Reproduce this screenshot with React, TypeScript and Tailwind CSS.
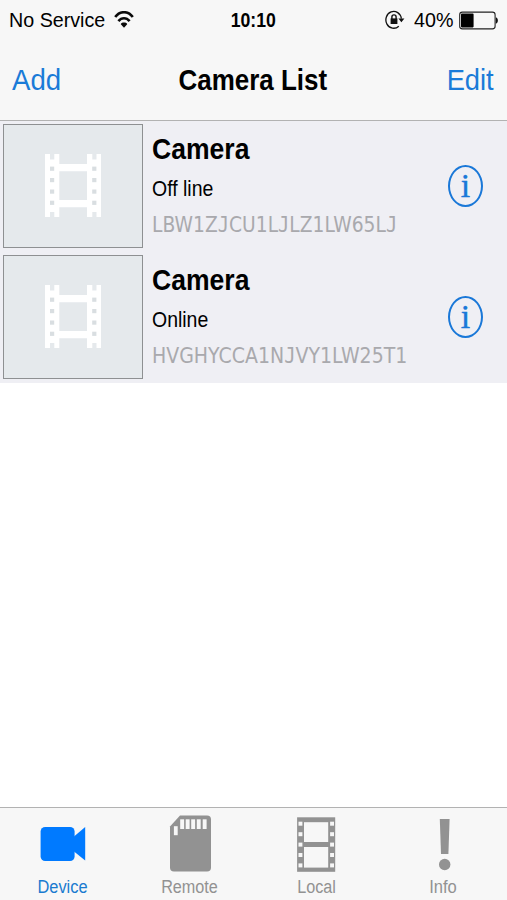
import React, { Fragment, FunctionComponent, ReactNode } from "react";

interface CameraModel {
  id: string;
  name: string;
  status: string;
  idClassName: string;
}

interface TabModel {
  name: string;
  className: string;
  icon: ReactNode;
}

const cameras: CameraModel[] = [
  { id: "LBW1ZJCU1LJLZ1LW65LJ", name: "Camera", status: "Off line", idClassName: "scale-x-[0.85]" },
  { id: "HVGHYCCA1NJVY1LW25T1", name: "Camera", status: "Online", idClassName: "scale-x-[0.86]" },
];

const WifiIcon = () => (
  <svg className="w-5 h-[18px]" viewBox="0 0 20 18" fill="none" stroke="#0a0a0a" strokeWidth="2.6">
    <path d="M1.2 6C6-.4 14-.4 18.8 6" />
    <path d="M4.4 10.1C7.6 6.2 12.4 6.2 15.6 10.1" />
    <path d="M10 16.8 6.8 13.2C6.8 10.8 13.2 10.8 13.2 13.2Z" fill="#0a0a0a" stroke="none" />
  </svg>
);

const RotationLockIcon = () => (
  <svg className="w-5 h-5" viewBox="0 0 20 20" fill="none" stroke="#111" strokeWidth="1.3">
    <path d="M13.8 16.2A7.8 8.4 0 1 1 16.4 8.6" />
    <path d="M13.4 8.4H19.4L16.4 12.2Z" fill="#111" stroke="none" />
    <rect x="5.6" y="8.4" width="6.8" height="5.6" fill="#111" stroke="none" />
    <path d="M6.9 9V7C6.9 4.1 11.1 4.1 11.1 7V9" strokeWidth="1.4" />
  </svg>
);

const BatteryIcon = () => (
  <svg className="w-10 h-[19px]" viewBox="0 0 40 19">
    <rect x="0.7" y="1.1" width="35.4" height="16.8" rx="2.6" fill="none" stroke="#222" strokeWidth="1.1" />
    <rect x="2" y="2.6" width="12.6" height="13.8" rx="0.8" fill="#000" />
    <path d="M36.8 6.3C39.6 7 39.6 12 36.8 12.7Z" fill="#111" />
  </svg>
);

const FilmIcon = () => (
  <svg className="w-14 h-[63px]" viewBox="0 0 56 63" fill="#fff">
    <path d="M0 0H5V5.5H9.3V0H14.3V10H42V0H47.3V5.5H51.5V0H56V63H51.5V58H47.3V63H42V53.3H14.3V63H9.3V58H5V63H0ZM14.3 17.3V46H42V17.3Z" fillRule="evenodd" />
    {[12.6, 24, 35.5, 46.7].map(y => (
      <Fragment key={y}>
        <rect x="5" y={y} width="4.2" height="4.2" fill="#d9dee1" />
        <rect x="47.2" y={y} width="4.2" height="4.2" fill="#d9dee1" />
      </Fragment>
    ))}
  </svg>
);

const tabs: TabModel[] = [
  {
    name: "Device",
    className: "text-[#1a7bd0] scale-x-[0.91]",
    icon: (
      <g fill="#007aff">
        <rect x="7.6" y="16" width="34" height="34" rx="4.5" />
        <path d="M41 25.5 52.2 16V49.5L41 40.5Z" />
      </g>
    ),
  },
  {
    name: "Remote",
    className: "text-[#929292] scale-x-[0.9]",
    icon: (
      <g>
        <path d="M20 4.5H47A4 4 0 0 1 51 8.5V56.5A4 4 0 0 1 47 60.5H14A4 4 0 0 1 10 56.5V15.5Z" fill="#929292" />
        <rect x="13.9" y="15.2" width="3.8" height="9" fill="#f7f7f7" />
        {[20.2, 25.7, 31.2, 36.8, 42.7].map(x => <rect key={x} x={x} y="8.3" width="3.9" height="9.7" fill="#f7f7f7" />)}
      </g>
    ),
  },
  {
    name: "Local",
    className: "text-[#929292] scale-x-[0.9]",
    icon: (
      <g>
        <rect x="10.1" y="6.3" width="38.1" height="54.5" fill="#929292" />
        <rect x="17" y="11.2" width="24.2" height="19.8" fill="#f7f7f7" />
        <rect x="17" y="36" width="24.2" height="20.6" fill="#f7f7f7" />
        {[10.7, 21.2, 31.6, 42, 52.4].map(y => (
          <Fragment key={y}>
            <rect x="11.5" y={y} width="3.9" height="4" fill="#f7f7f7" />
            <rect x="43.1" y={y} width="3.9" height="4" fill="#f7f7f7" />
          </Fragment>
        ))}
      </g>
    ),
  },
  {
    name: "Info",
    className: "text-[#929292] scale-x-[0.92]",
    icon: (
      <g fill="#929292">
        <path d="M25.8 8H35.6L34.4 43H27Z" />
        <circle cx="30.7" cy="53.5" r="5.7" />
      </g>
    ),
  },
];

const App: FunctionComponent = () => {
  return (
    <div className="flex flex-col w-full h-[900px] bg-white text-black select-none overflow-hidden font-['Liberation_Sans',Arial,sans-serif]">
      <header className="h-[121px] shrink-0 bg-[#f7f7f7] border-b border-[#b2b2b2]">
        <div className="grid grid-cols-[1fr_auto_1fr] items-center h-10 text-[20.5px] leading-5 whitespace-nowrap">
          <div className="flex items-center pl-[9px]">
            <span className="w-[105px] origin-left scale-x-[0.96]">No Service</span>
            <WifiIcon />
          </div>
          <span className="font-bold scale-x-[0.86]">10:10</span>
          <div className="flex items-center justify-end pr-2">
            <RotationLockIcon />
            <span className="w-[45px] ml-[9px] origin-left scale-x-[0.96]">40%</span>
            <BatteryIcon />
          </div>
        </div>
        <div className="grid grid-cols-[1fr_auto_1fr] items-center h-[79px] text-[30px] leading-[30px] whitespace-nowrap">
          <button className="justify-self-start ml-3 text-[#1a7bd8] origin-left scale-x-[0.92]">Add</button>
          <h1 className="mr-0.5 font-bold scale-x-[0.865]">Camera List</h1>
          <button className="justify-self-end mr-[13px] text-[#1a7bd8] origin-right scale-x-[0.91]">Edit</button>
        </div>
      </header>

      <main className="grow">
        {cameras.map(camera => (
          <div key={camera.id} className="flex h-[131px] bg-[#efeff4]">
            <div className="w-[140px] h-[124px] mt-[3px] ml-[3px] pt-[29px] pl-[41px] shrink-0 border border-[#8e9092] bg-[#e5e9ec]">
              <FilmIcon />
            </div>
            <div className="w-[280px] shrink-0 pl-[9px] pt-[13px] whitespace-nowrap">
              <h2 className="w-fit text-[30px] leading-[30px] font-bold origin-left scale-x-[0.885]">{camera.name}</h2>
              <p className="w-fit mt-3.5 text-[22px] leading-[22px] origin-left scale-x-[0.885]">{camera.status}</p>
              <p className={`w-fit mt-3.5 text-[22px] leading-[22px] text-[#a9a9ad] origin-left font-['DejaVu_Sans',sans-serif] ${camera.idClassName}`}>
                {camera.id.split(/(J)/).map((part, i) => (
                  <span key={i} className={part === "J" ? "font-['DejaVu_Sans_Mono',monospace]" : ""}>{part}</span>
                ))}
              </p>
            </div>
            <button className="flex items-center justify-center w-[35px] h-[42px] mt-11 ml-[25px] shrink-0 rounded-[50%] border-2 border-[#1a78d8] text-[#1a78d8]">
              <span className="font-['Liberation_Serif',serif] text-[34px] leading-[34px] [-webkit-text-stroke:0.4px_#1a78d8]">i</span>
            </button>
          </div>
        ))}
      </main>

      <nav className="grid grid-cols-4 h-[93px] shrink-0 bg-[#f7f7f7] border-t border-[#b2b2b2]">
        {tabs.map(tab => (
          <div key={tab.name} className="flex flex-col items-center pt-[3px]">
            <svg className="w-[60px] h-[62px]" viewBox="0 0 60 62">{tab.icon}</svg>
            <span className={`mr-px mt-[5px] text-[18px] leading-[18px] ${tab.className}`}>{tab.name}</span>
          </div>
        ))}
      </nav>
    </div>
  );
};

export default App;
